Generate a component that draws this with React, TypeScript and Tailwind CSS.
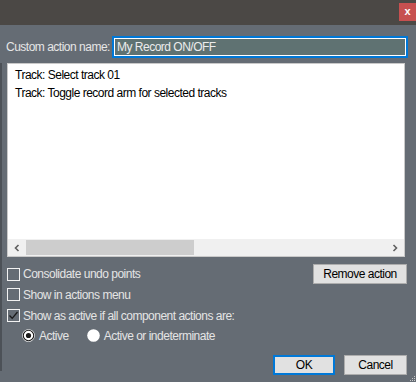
import React from 'react';

const Checkbox: React.FC<{ checked?: boolean; label: string }> = ({ checked = false, label }) => (
  <label className="flex items-center gap-[3px] text-[#e4e4e4]">
    <span className="w-[13px] h-[13px] border border-[#f2f2f2] flex items-center justify-center">
      {checked && (
        <svg width="11" height="11" viewBox="0 0 11 11">
          <path d="M1.5 5.5 L4.2 8.3 L9.5 2" fill="none" stroke="#1a1a1a" strokeWidth="1.3" />
        </svg>
      )}
    </span>
    <span>{label}</span>
  </label>
);

const Radio: React.FC<{ checked?: boolean; label: string }> = ({ checked = false, label }) => (
  <label className="flex items-center gap-[4px] text-[#e4e4e4]">
    <svg width="13" height="13" viewBox="0 0 13 13">
      <circle cx="6.5" cy="6.5" r="6.3" fill="#ffffff" />
      {checked && (
        <>
          <circle cx="6.5" cy="6.5" r="5.2" fill="none" stroke="#1a1a1a" strokeWidth="1.1" />
          <circle cx="6.5" cy="6.5" r="2.6" fill="#1a1a1a" />
        </>
      )}
    </svg>
    <span>{label}</span>
  </label>
);

const Button: React.FC<{ label: string; primary?: boolean; className?: string }> = ({
  label,
  primary = false,
  className = '',
}) => (
  <button
    className={`h-[20px] bg-[#e1e1e1] text-black flex items-center justify-center ${
      primary ? 'border-2 border-[#0078d7]' : 'border border-[#adadad]'
    } ${className}`}
  >
    {label}
  </button>
);

export default function App() {
  return (
    <div className="relative w-[416px] h-[382px] bg-[#656c74] font-['Liberation_Sans',Arial,sans-serif] text-[12px] tracking-[-0.5px] leading-none overflow-hidden whitespace-nowrap">
      {/* title bar */}
      <div className="h-[25px] bg-[#4b4845] flex justify-end items-start pt-[3px]">
        <div className="w-[17px] h-[18px] bg-[#c75050] text-white font-bold text-[11px] flex items-center justify-center pb-[1px] tracking-normal">
          x
        </div>
      </div>

      {/* name row */}
      <div className="flex items-center mt-[11px] pl-[6px] pr-[8px]">
        <span className="w-[106px] shrink-0 text-[#e6e6e6]">Custom action name:</span>
        <div className="flex-1 h-[22px] border-2 border-[#0078d7] bg-[#5f7272] shadow-[inset_0_0_0_1px_#ffffff] flex items-center pl-[3px] text-[#ececec]">
          My Record ON/OFF
        </div>
      </div>

      <div className="mt-[5px] h-[308px] border-l-2 border-[#4c5157]">
        {/* action list */}
        <div className="ml-[5px] mt-[1px] w-[398px] h-[194px] bg-white border border-[#c9c9c9] flex flex-col">
          <div className="flex-1 pl-[7px] pt-[2px] text-black flex flex-col">
            <div className="h-[18px] flex items-center">Track: Select track 01</div>
            <div className="h-[18px] flex items-center">Track: Toggle record arm for selected tracks</div>
          </div>
          <div className="h-[17px] bg-[#f0f0f0] flex items-center">
            <div className="w-[18px] flex justify-center">
              <svg width="8" height="8" viewBox="0 0 8 8">
                <path d="M5.5 1 L2.5 4 L5.5 7" fill="none" stroke="#606060" strokeWidth="1.6" />
              </svg>
            </div>
            <div className="w-[168px] h-[15px] bg-[#cdcdcd]" />
            <div className="flex-1" />
            <div className="w-[18px] flex justify-center">
              <svg width="8" height="8" viewBox="0 0 8 8">
                <path d="M2.5 1 L5.5 4 L2.5 7" fill="none" stroke="#606060" strokeWidth="1.6" />
              </svg>
            </div>
          </div>
        </div>

        {/* options */}
        <div className="pl-[5px] pr-[9px] mt-[7px]">
          <div className="h-[20px] flex items-center justify-between">
            <Checkbox label="Consolidate undo points" />
            <Button label="Remove action" className="w-[94px]" />
          </div>
          <div className="h-[21px] flex items-center">
            <Checkbox label="Show in actions menu" />
          </div>
          <div className="h-[21px] flex items-center">
            <Checkbox checked label="Show as active if all component actions are:" />
          </div>
          <div className="h-[19px] flex items-center gap-[18px] pl-[15px]">
            <Radio checked label="Active" />
            <Radio label="Active or indeterminate" />
          </div>
          <div className="mt-[10px] flex justify-end gap-[9px]">
            <Button primary label="OK" className="w-[62px]" />
            <Button label="Cancel" className="w-[63px]" />
          </div>
        </div>
      </div>

      {/* resize grip */}
      <svg className="absolute right-0 bottom-0" width="6" height="6" viewBox="0 0 6 6">
        <rect x="4" y="0" width="1" height="1" fill="#c8c8c8" />
        <rect x="2" y="2" width="1" height="1" fill="#c8c8c8" />
        <rect x="4" y="2" width="1" height="1" fill="#c8c8c8" />
        <rect x="0" y="4" width="1" height="1" fill="#c8c8c8" />
        <rect x="2" y="4" width="1" height="1" fill="#c8c8c8" />
        <rect x="4" y="4" width="1" height="1" fill="#c8c8c8" />
      </svg>
    </div>
  );
}
